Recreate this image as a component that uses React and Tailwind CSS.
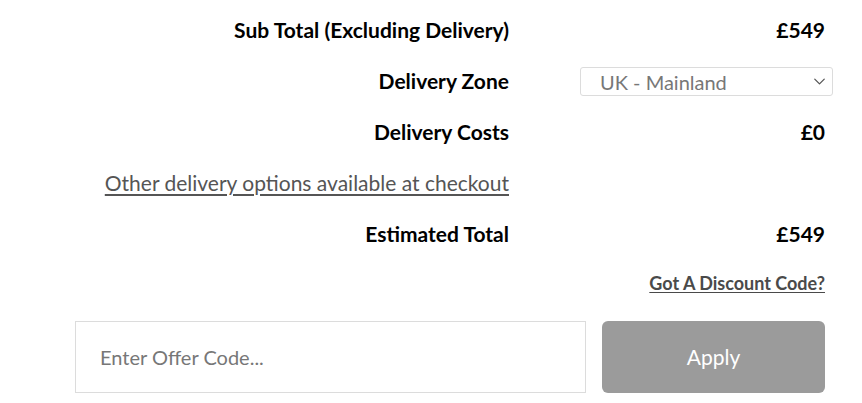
import { ChevronDown } from "lucide-react";

const rows = [
  { label: "Sub Total (Excluding Delivery)", value: "£549" },
  { label: "Delivery Zone", select: true },
  { label: "Delivery Costs", value: "£0" },
  { link: "Other delivery options available at checkout" },
  { label: "Estimated Total", value: "£549" },
];

export default function App() {
  return (
    <div
      className="w-[862px] h-[403px] bg-white overflow-hidden text-black"
      style={{ fontFamily: "Lato, 'Open Sans', sans-serif" }}
    >
      <div className="ml-[75px] w-[750px] pt-[4px]">
        {rows.map((row, i) => (
          <div key={i} className="grid grid-cols-[434px_1fr] gap-x-[71px] h-[51px] items-center">
            <div className="text-right">
              {row.link ? (
                <a href="#" className="text-[21px] text-[#555] underline underline-offset-[3px]">
                  {row.link}
                </a>
              ) : (
                <span className="text-[21px] font-bold">{row.label}</span>
              )}
            </div>
            <div className="flex justify-end">
              {row.select ? (
                <div className="w-[253px] h-[29px] mr-[-7px] mt-[2px] border border-[#dcdcdc] rounded-[3px] flex items-center justify-between pl-[19px] pr-[3px]">
                  <span className="text-[20px] text-[#777]">UK - Mainland</span>
                  <ChevronDown size={19} strokeWidth={1.6} className="text-[#555]" />
                </div>
              ) : row.value ? (
                <span className="text-[21px] font-bold">{row.value}</span>
              ) : null}
            </div>
          </div>
        ))}
        <div className="h-[48px] flex items-center justify-end">
          <a href="#" className="text-[18px] font-bold text-[#4a4a4a] underline underline-offset-[2px]">
            Got A Discount Code?
          </a>
        </div>
        <div className="mt-[14px] flex gap-[16px]">
          <input
            placeholder="Enter Offer Code..."
            className="w-[511px] h-[72px] border border-[#dcdcdc] px-[24px] text-[20px] text-[#333] placeholder:text-[#777] outline-none"
          />
          <button className="flex-1 h-[72px] bg-[#9b9b9b] rounded-[6px] text-white text-[21px]">
            Apply
          </button>
        </div>
      </div>
    </div>
  );
}
